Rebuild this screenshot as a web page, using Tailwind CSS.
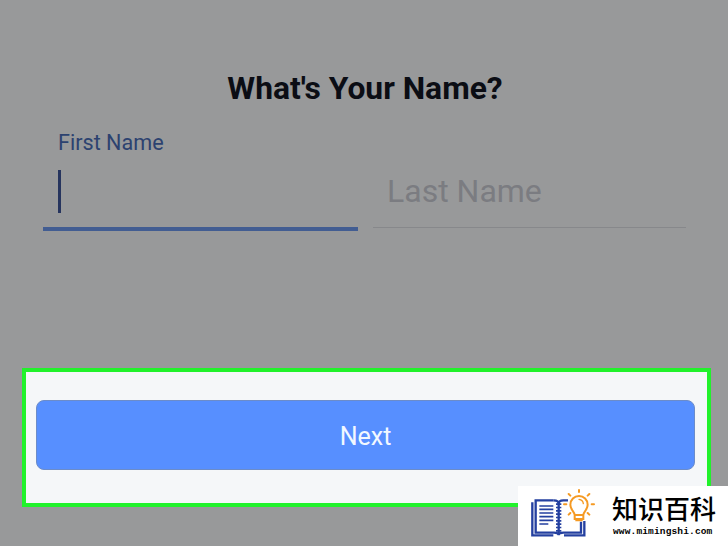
<!DOCTYPE html>
<html lang="en">
  <head>
    <meta charset="UTF-8" />
    <meta name="viewport" content="width=device-width, initial-scale=1.0" />
    <title>What's Your Name?</title>
    <script src="https://cdn.jsdelivr.net/npm/@tailwindcss/browser@4"></script>
  </head>
  <body
    class="relative w-[728px] h-[546px] overflow-hidden bg-[#98999a] font-['Roboto',sans-serif]"
  >
    <h1
      class="pt-[68px] pl-[2px] text-center text-[31.8px] leading-[40px] font-bold text-[#0b0d14]"
    >
      What's Your Name?
    </h1>

    <!-- Name fields -->
    <div class="flex gap-[15px] pl-[43px] pt-[20px] h-[123px]">
      <div class="w-[315px] h-[103px] border-b-4 border-[#425d92] pl-[15px]">
        <label class="block pt-px text-[21.6px] leading-[28px] text-[#2c4270]"
          >First Name</label
        >
        <div class="mt-[13px] w-[3px] h-[43px] bg-[#26345e]"></div>
      </div>
      <div
        class="w-[313px] h-[100px] border-b border-[#87888b] pl-[14px] pt-[43px] text-[32px] leading-[40px] text-[#7b7c81]"
      >
        Last Name
      </div>
    </div>

    <!-- Highlighted area -->
    <div
      class="mt-[137px] ml-[22px] w-[689px] h-[139px] border-4 border-[#21f22b] bg-[#f5f7f9] pt-[28px] px-[10px]"
    >
      <button
        class="block w-[659px] h-[70px] rounded-lg border border-[#6c8cc9] bg-[#578fff] pt-[4px] text-[25px] text-[#f2f8ff]"
      >
        Next
      </button>
    </div>

    <!-- Site badge -->
    <div class="absolute left-[518px] top-[486px] w-[210px] h-[60px] bg-white flex">
      <svg
        width="94"
        height="60"
        viewBox="0 18 282 180"
        fill="none"
        stroke-width="7"
        class="shrink-0"
      >
        <g stroke="#2440a0">
          <path d="M107 61H53v97h55q14 0 14 8q0-8 14-8h53v-33" />
          <path d="M150 61h-14q-14 0-14 10" />
          <path d="M43 67v99h63M138 166h61v-43" />
          <path d="M107 61q15 0 15 10v94" />
          <path
            d="M122 70v90"
            stroke-width="16"
            stroke-dasharray="5 5"
          />
          <path
            d="M64 78h42M64 88h42M64 99h42M64 110h42M64 121h42M64 132h27"
            stroke-width="5"
          />
        </g>
        <g stroke="#f59a23" stroke-width="6" stroke-linecap="round">
          <path
            d="M170 105c0-10-13-15-13-31a26 26 0 0 1 52 0c0 16-13 21-13 31zM170 105v12h26v-12M175 117v4h16v-4"
          />
          <path d="M183 58q12 2 13 13" stroke-width="4" />
          <path
            d="M183 30v6M152 42l5 5M214 42l-5 5M138 73h7M221 73h7M152 104l5-5M214 104l-5-5"
          />
        </g>
      </svg>
      <div class="w-[110px] pt-[6px] text-black">
        <div
          class="font-['Noto_Sans_CJK_SC',sans-serif] text-[26px] leading-[32px] font-medium whitespace-nowrap"
          lang="zh-CN"
        >
          知识百科
        </div>
        <div
          class="font-['Liberation_Mono',monospace] text-[9.5px] leading-[12px] font-bold tracking-[0.15px] mt-[2px] pl-[1px] whitespace-nowrap"
        >
          www.mimingshi.com
        </div>
      </div>
    </div>
  </body>
</html>
